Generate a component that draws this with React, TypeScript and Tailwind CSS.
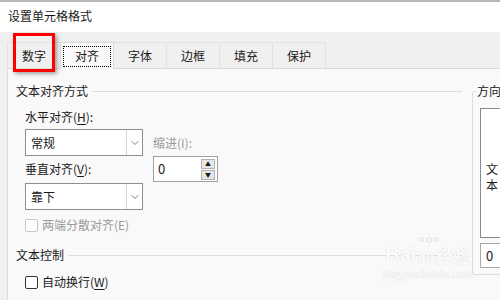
import { ChevronDown } from 'lucide-react';

// ────────────────────────────────────────────────────────────────
// Small pieces
// ────────────────────────────────────────────────────────────────
const TABS = ['数字', '对齐', '字体', '边框', '填充', '保护'];

function Tab({ label, active }: { label: string; active: boolean }) {
  if (active) {
    return (
      <div className="relative z-10 flex h-[27px] w-[54px] -mb-px items-center justify-center border border-b-0 border-[#dadada] bg-[#f9f9f9] -ml-px">
        <div className="flex h-[21px] w-[48px] items-center justify-center border border-dotted border-black">
          {label}
        </div>
      </div>
    );
  }
  return (
    <div className="flex h-[26px] w-[54px] items-center justify-center border border-b-0 border-[#e2e2e2] bg-[#f0f0f0] -ml-px">
      {label}
    </div>
  );
}

function Select({ value }: { value: string }) {
  return (
    <div className="flex h-[27px] w-[118px] items-stretch border border-[#8f8f8f] bg-white">
      <div className="flex flex-1 items-center pl-[5px]">{value}</div>
      <div className="flex w-[16px] items-center justify-center border-l border-[#d4d4d4]">
        <ChevronDown size={12} strokeWidth={1.3} className="text-[#333]" />
      </div>
    </div>
  );
}

function Checkbox({ label, disabled }: { label: React.ReactNode; disabled?: boolean }) {
  return (
    <div className={`flex h-[16px] items-center gap-[4px] pl-[9px] ${disabled ? 'text-[#9a9a9a]' : ''}`}>
      <span
        className={`h-[13px] w-[13px] rounded-[2px] border bg-white ${
          disabled ? 'border-[#c8c8c8]' : 'border-[#333]'
        }`}
      />
      <span>{label}</span>
    </div>
  );
}

function SectionHeader({ title }: { title: string }) {
  return (
    <div className="flex h-[16px] items-center">
      <span>{title}</span>
      <div className="ml-[4px] mr-[10px] h-px flex-1 bg-[#dcdcdc]" />
    </div>
  );
}

// ────────────────────────────────────────────────────────────────
// Main
// ────────────────────────────────────────────────────────────────
export default function App() {
  return (
    <div
      className="relative h-[300px] w-[500px] overflow-hidden bg-[#f0f0f0] text-[12px] leading-[16px] text-[#1a1a1a]"
      style={{ fontFamily: '"Noto Sans CJK SC", "Noto Sans", sans-serif' }}
    >
      {/* Title bar */}
      <div className="flex h-[32px] items-center border-t-2 border-[#b8b8b8] bg-white pl-[8px] pb-[2px]">
        设置单元格格式
      </div>

      {/* Tabs */}
      <div className="flex items-end pl-[8px] pt-[10px]">
        {TABS.map((t) => (
          <Tab key={t} label={t} active={t === '对齐'} />
        ))}
      </div>

      {/* Panel */}
      <div className="ml-[7px] flex h-[232px] border-l border-t border-[#dadada] bg-[#f9f9f9]">
        {/* Left column */}
        <div className="flex w-[464px] shrink-0 flex-col pl-[8px] pt-[14px]">
          <SectionHeader title="文本对齐方式" />

          <div className="mt-[10px] flex pl-[9px]">
            <div className="flex flex-col">
              <div className="flex h-[16px] items-center">
                水平对齐(<span className="underline underline-offset-2">H</span>):
              </div>
              <div className="mt-[4px]">
                <Select value="常规" />
              </div>
              <div className="mt-[5px] flex h-[16px] items-center">
                垂直对齐(<span className="underline underline-offset-2">V</span>):
              </div>
              <div className="mt-[6px]">
                <Select value="靠下" />
              </div>
            </div>

            <div className="ml-[10px] flex flex-col pt-[26px]">
              <div className="flex h-[16px] items-center text-[#9a9a9a]">缩进(I):</div>
              <div className="mt-[5px] flex h-[26px] w-[65px] items-center border border-[#a0a0a0] bg-white pl-[4px] pr-[2px]">
                <span className="flex-1 text-[13px]">0</span>
                <div className="flex flex-col gap-px">
                  <div className="flex h-[10px] w-[14px] items-center justify-center border border-[#b0b0b0] bg-[#e6e6e6] text-[6px] leading-none">
                    ▲
                  </div>
                  <div className="flex h-[10px] w-[14px] items-center justify-center border border-[#b0b0b0] bg-[#e6e6e6] text-[6px] leading-none">
                    ▼
                  </div>
                </div>
              </div>
            </div>
          </div>

          <div className="mt-[7px]">
            <Checkbox label="两端分散对齐(E)" disabled />
          </div>

          <div className="mt-[14px]">
            <SectionHeader title="文本控制" />
          </div>

          <div className="mt-[11px]">
            <Checkbox
              label={
                <>
                  自动换行(<span className="underline underline-offset-2">W</span>)
                </>
              }
            />
          </div>
          <div className="mt-[9px]">
            <Checkbox
              label={
                <>
                  缩小字体填充(<span className="underline underline-offset-2">K</span>)
                </>
              }
            />
          </div>
        </div>

        {/* Right column: 方向 */}
        <div className="w-[160px] shrink-0 pt-[14px]">
          <fieldset className="rounded-[2px] border border-[#dcdcdc] pb-[6px] pl-[7px]">
            <legend className="-ml-[4px] px-[1px] leading-[16px]">方向</legend>
            <div className="mt-[9px] flex h-[130px] flex-col justify-start border border-[#8a8a8a] bg-white pl-[5px] pt-[52px] leading-[16px]">
              <span>文</span>
              <span>本</span>
            </div>
            <div className="mt-[5px] flex h-[25px] items-center border border-[#a8a8a8] bg-white pl-[5px] text-[13px]">
              0
            </div>
          </fieldset>
        </div>
      </div>

      {/* Red highlight annotation */}
      <div className="absolute left-[13px] top-[33px] h-[39px] w-[42px] border-[3px] border-[#ff0000] shadow-[2px_2px_4px_rgba(0,0,0,0.35)]" />

      {/* Watermark */}
      <div className="pointer-events-none absolute left-[383px] top-[244px] flex flex-col items-center text-[#fbfbfb] [text-shadow:0_0_1px_#dedede,0_0_1px_#dedede]">
        <div className="flex items-end leading-none">
          <span className="text-[20px] font-bold" style={{ fontFamily: '"Liberation Sans", sans-serif' }}>
            Bai
          </span>
          <span className="relative ml-[1px] text-[13px] font-bold">
            <span className="absolute -top-[14px] left-[2px] flex gap-[2px]">
              <span className="h-[5px] w-[5px] rounded-full border border-[#e0e0e0]" />
              <span className="h-[6px] w-[6px] rounded-full border border-[#e0e0e0]" />
              <span className="h-[5px] w-[5px] rounded-full border border-[#e0e0e0]" />
            </span>
            du
          </span>
          <span className="ml-[2px] text-[17px] font-bold">经验</span>
        </div>
        <div className="mt-[4px] text-[12px] leading-none" style={{ fontFamily: '"Liberation Serif", serif' }}>
          jingyan.baidu.com
        </div>
      </div>
    </div>
  );
}
